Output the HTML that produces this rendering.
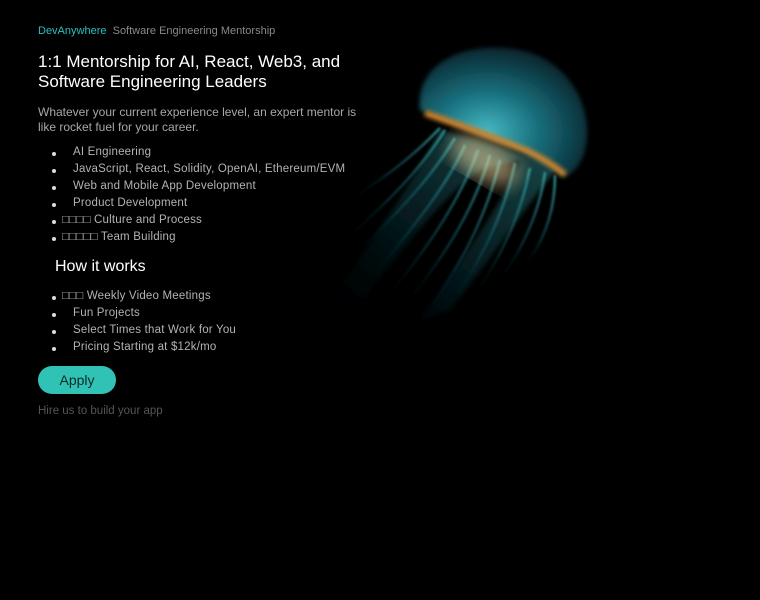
<!DOCTYPE html>
<html><head><meta charset="utf-8"><style>
html,body{margin:0;background:#000;width:760px;height:600px;overflow:hidden;font-family:"Liberation Sans",sans-serif;}
.t{position:absolute;white-space:nowrap;}
.li{position:absolute;left:52px;font-size:11.5px;color:#b3b3b3;white-space:nowrap;letter-spacing:0.2px}
.li:before{content:"";position:absolute;left:0;top:6px;width:4px;height:4px;border-radius:50%;background:#ddd}
.li span{position:absolute;left:21px}
.li i{position:absolute;left:10px;font-style:normal}
</style></head><body>
<svg style="position:absolute;left:0;top:0" width="760" height="600">
<defs>
<radialGradient id="bell" cx="0.4" cy="0.65" r="0.65">
<stop offset="0" stop-color="#45b8c2"/><stop offset="0.45" stop-color="#1a7280"/><stop offset="1" stop-color="#07262e"/>
</radialGradient>
<linearGradient id="ten" x1="1" y1="0" x2="0" y2="1">
<stop offset="0" stop-color="#3aa6a8"/><stop offset="0.6" stop-color="#0d4650" stop-opacity="0.7"/><stop offset="1" stop-color="#021215" stop-opacity="0"/>
</linearGradient>
<filter id="b"><feGaussianBlur stdDeviation="2.5"/></filter>
<filter id="b1"><feGaussianBlur stdDeviation="1"/></filter>
<filter id="b2"><feGaussianBlur stdDeviation="9"/></filter>
</defs>
<g filter="url(#b)" opacity="0.8">
<path d="M440 130 C420 170 380 230 330 300 L360 305 C400 250 450 190 480 170 L520 160 C500 210 460 260 420 320 L450 310 C490 260 530 200 560 165 Z" fill="url(#ten)" opacity="0.6"/>
</g>
<g filter="url(#b1)" fill="none" stroke="url(#ten)" stroke-width="2.5" opacity="0.85">
<path d="M445 130 C420 170 390 200 345 240"/>
<path d="M455 138 C430 180 395 215 355 255"/>
<path d="M465 145 C445 190 410 230 370 280"/>
<path d="M478 150 C460 200 430 245 385 300"/>
<path d="M490 155 C475 205 450 250 405 305"/>
<path d="M500 160 C488 210 465 260 425 315"/>
<path d="M515 163 C505 210 485 255 450 305"/>
<path d="M530 168 C522 210 505 250 475 295"/>
<path d="M545 172 C540 210 525 245 500 280"/>
<path d="M555 175 C555 210 545 240 525 265"/>
<path d="M440 128 C410 160 380 180 350 200"/>
</g>
<ellipse cx="485" cy="160" rx="38" ry="20" fill="#f0d9a0" opacity="0.55" filter="url(#b2)" transform="rotate(30 485 160)"/>
<path d="M420 110 C415 60 470 40 520 50 C570 60 595 110 585 150 C580 170 565 180 560 175 C530 150 470 130 420 110 Z" fill="url(#bell)" filter="url(#b)"/>
<path d="M425 113 C460 125 500 140 525 150 C540 157 555 166 565 175" stroke="#d9862c" stroke-width="6" fill="none" filter="url(#b)"/>
</svg>
<div class="t" style="left:38px;top:25px;font-size:11px;color:#2bc0c0">DevAnywhere <span style="color:#8a8a8a">&nbsp;Software Engineering Mentorship</span></div>
<div class="t" style="left:38px;top:52px;font-size:17px;line-height:20px;color:#fff">1:1 Mentorship for AI, React, Web3, and<br>Software Engineering Leaders</div>
<div class="t" style="left:38px;top:105px;font-size:12px;line-height:15px;color:#a8a8a8">Whatever your current experience level, an expert mentor is<br>like rocket fuel for your career.</div>
<div class="li" style="top:146px"><span>AI Engineering</span></div>
<div class="li" style="top:163px"><span>JavaScript, React, Solidity, OpenAI, Ethereum/EVM</span></div>
<div class="li" style="top:180px"><span>Web and Mobile App Development</span></div>
<div class="li" style="top:197px"><span>Product Development</span></div>
<div class="li" style="top:214px"><i>□□□□ Culture and Process</i></div>
<div class="li" style="top:231px"><i>□□□□□ Team Building</i></div>
<div class="t" style="left:55px;top:258px;font-size:16px;color:#fff">How it works</div>
<div class="li" style="top:290px"><i>□□□ Weekly Video Meetings</i></div>
<div class="li" style="top:307px"><span>Fun Projects</span></div>
<div class="li" style="top:324px"><span>Select Times that Work for You</span></div>
<div class="li" style="top:341px"><span>Pricing Starting at $12k/mo</span></div>
<div class="t" style="left:38px;top:366px;width:78px;height:28px;border-radius:14px;background:#30c3b5;color:#0a2a28;font-size:14px;line-height:28px;text-align:center">Apply</div>
<div class="t" style="left:38px;top:405px;font-size:11.5px;color:#555">Hire us to build your app</div>
</body></html>
